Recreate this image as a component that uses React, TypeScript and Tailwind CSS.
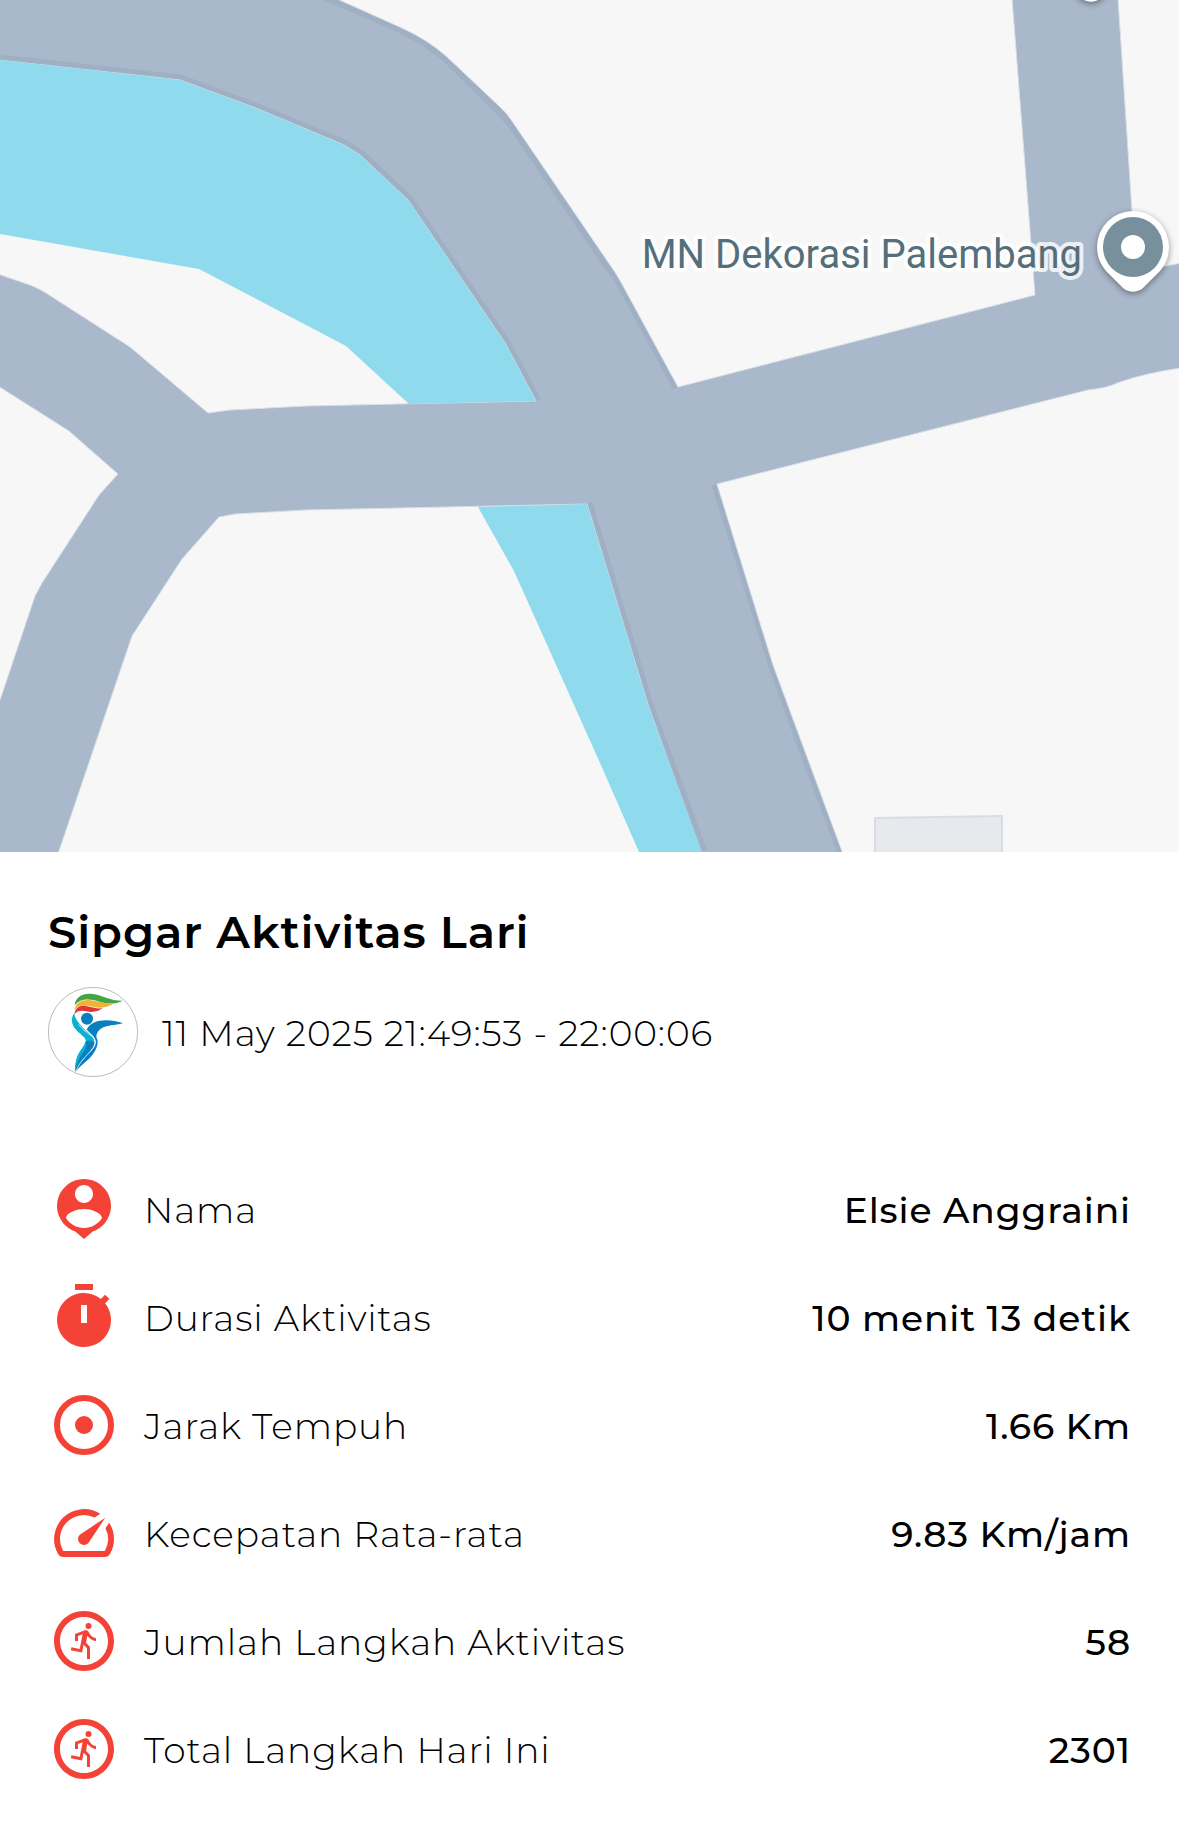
import type { ReactNode } from "react";
import { MdOutlineRunCircle, MdSpeed } from "react-icons/md";

function PersonPinIcon() {
  return (
    <svg viewBox="0 0 24 24" fill="currentColor" className="size-full">
      <path
        fillRule="evenodd"
        d="M12 2a9 9 0 0 0-2.9 17.52L12 22l2.9-2.48A9 9 0 0 0 12 2Zm0 2c1.66 0 3 1.34 3 3s-1.34 3-3 3-3-1.34-3-3 1.34-3 3-3Zm0 14.3c-2.5 0-4.71-1.28-6-3.22.03-1.99 4-3.08 6-3.08s5.97 1.09 6 3.08c-1.29 1.94-3.5 3.22-6 3.22Z"
      />
    </svg>
  );
}

function TimerIcon() {
  return (
    <svg viewBox="0 0 24 24" fill="currentColor" className="size-full">
      <path d="M9 1h6v2H9z" />
      <path
        fillRule="evenodd"
        d="M19.03 7.39l1.42-1.42-1.41-1.41-1.42 1.42A9 9 0 1 0 19.03 7.39ZM13 14h-2V8h2v6Z"
      />
    </svg>
  );
}

function TargetIcon() {
  return (
    <svg viewBox="0 0 24 24" className="size-full">
      <circle cx="12" cy="12" r="9" fill="none" stroke="currentColor" strokeWidth="2" />
      <circle cx="12" cy="12" r="3" fill="currentColor" />
    </svg>
  );
}

function Logo() {
  return (
    <svg viewBox="24 20 270 270" className="size-[90px] shrink-0" role="img" aria-label="Sipgar">
      <circle cx="159" cy="155" r="134" fill="#fff" stroke="#9a9a9a" strokeWidth="2" />
      <path d="M104 75C106 50 128 36 160 41c32 6 52 21 89 20-24 11-46 11-71 3-30-10-57-10-74 11Z" fill="#43a548" />
      <path d="M103 90c4-25 25-34 52-30 24 4 40 12 66 9-17 13-38 16-62 10-24-6-44-5-56 11Z" fill="#f2b233" />
      <path d="M104 102c0-18 15-28 34-25 18 3 31 9 50 7-14 10-30 13-48 9-17-4-29-2-36 9Z" fill="#dc3a32" />
      <circle cx="141" cy="115" r="18" fill="#0a7fc0" />
      <path d="M103 98c-11 16-9 33 3 48 13 16 29 22 31 34 2 16-18 31-25 50-6 16-7 31-6 46 8-33 22-45 36-60 16-16 23-27 20-39-4-12-20-20-32-34-13-15-26-26-27-45Z" fill="#07b3d3" />
      <path d="M249 129c-31-12-66-12-88-2-12 6-19 14-21 21 13 13 27 21 27 37 0 14-13 24-25 37-16 17-29 31-36 54 20-27 36-32 51-52 19-25 18-40 12-54 0-12 6-21 17-27 17-8 37-8 63-14Z" fill="#0a7fc0" />
      <path d="M137 184c-3 18-18 29-24 46-6 16-7 31-6 46 8-26 20-39 33-52 14-15 23-26 24-38-8-5-18-7-27-2Z" fill="#0a7fc0" />
      <path d="M136 182c-3 18-18 29-24 46-5 14-6 26-6 38 7-23 16-39 24-51 8-13 12-22 6-33Z" fill="#07b3d3" />
      <path
        d="M116 132c10 14 21 22 33 31 14 10 19 18 16 30-3 13-19 24-32 40-13 15-21 27-26 43"
        fill="none"
        stroke="#fff"
        strokeWidth="2"
      />
    </svg>
  );
}

function MapPin({ x, y }: { x: number; y: number }) {
  return (
    <g transform={`translate(${x} ${y})`}>
      <path
        d="M0-36a36 36 0 0 1 36 36c0 9-3 17-9 24L10 41c-6 5-14 5-20 0l-17-17c-6-7-9-15-9-24A36 36 0 0 1 0-36Z"
        fill="#fff"
        className="drop-shadow-[0_2px_3px_rgb(0_0_0/0.4)]"
      />
      <circle r="30" fill="#78909c" />
      <circle r="12" fill="#fff" />
    </g>
  );
}

function RouteMap() {
  return (
    <svg viewBox="0 0 1179 852" className="block h-auto w-full" role="img" aria-label="Peta rute">
      <rect width="1179" height="852" fill="#a9b8ca" />

      {/* darker casing of the main road */}
      <g fill="none" stroke="#a0b0c4" strokeWidth="11">
        <path d="M325-5 402 28 425 41 446 56 503 113 513 124 604 258 619 278 678 387" />
        <path d="M717 484 773 663 808 760 843 852" />
        <path d="M0 60 180 80 253 107 344 145 360 155 408 200 505 343 536 401" />
        <path d="M587 503 648 705 702 852" />
      </g>

      {/* blocks between the roads */}
      <g fill="#f7f7f7" stroke="#d9dfe7" strokeWidth="1">
        <path d="M335-2 402 28Q428 40 446 56L499 106Q508 114 514 124L608 262Q616 273 622 284L678 387 1035 295 1012-2Z" />
        <path d="M1118-2 1136 272 1181 263V-2Z" />
        <path d="M1181 368Q1145 373 1117 383 1108 388 1088 390L717 484 773 665 843 854H1181Z" />
        <path d="M-2 60 180 80 253 107 344 145 360 155 408 200 505 343 536 401 306 406 230 410 208 413 130 347 46 293Q38 288 30 285L-2 274Z" />
        <path d="M-2 386 69 431 118 474 99 495 42 583 35 596-2 706Z" />
        <path d="M58 854 132 636 182 559 219 517 235 514 306 510 587 504 648 705 702 854Z" />
      </g>

      {/* river */}
      <g fill="#90daee">
        <path d="M0 60 180 80 253 107 344 145 360 155 408 200 505 343 536 401 409 404 346 346 199 269 0 234Z" />
        <path d="M478 507 587 504 648 705 702 852H639L600 763 514 571Z" />
      </g>

      <path d="M875 854V818L1002 816V854Z" fill="#e8e9ed" stroke="#d9dbe8" strokeWidth="2" />

      <MapPin x={1091} y={-43} />
      <MapPin x={1133} y={247} />
      <text
        x="1082"
        y="268"
        textAnchor="end"
        fill="#546e7a"
        stroke="#fff"
        strokeOpacity="0.8"
        strokeWidth="8"
        strokeLinejoin="round"
        paintOrder="stroke"
        className="font-[Roboto,sans-serif] text-[40px] font-normal tracking-normal"
      >
        MN Dekorasi Palembang
      </text>
    </svg>
  );
}

function StatRow({ icon, label, value }: { icon: ReactNode; label: string; value: string }) {
  return (
    <div className="flex items-center gap-6">
      <span className="size-[72px] shrink-0 text-[#f44336]">{icon}</span>
      <dt className="flex-1 pt-0.5">{label}</dt>
      <dd className="pt-0.5 text-right font-medium">{value}</dd>
    </div>
  );
}

const stats = [
  { icon: <PersonPinIcon />, label: "Nama", value: "Elsie Anggraini" },
  { icon: <TimerIcon />, label: "Durasi Aktivitas", value: "10 menit 13 detik" },
  { icon: <TargetIcon />, label: "Jarak Tempuh", value: "1.66 Km" },
  { icon: <MdSpeed className="size-full" />, label: "Kecepatan Rata-rata", value: "9.83 Km/jam" },
  { icon: <MdOutlineRunCircle className="size-full" />, label: "Jumlah Langkah Aktivitas", value: "58" },
  { icon: <MdOutlineRunCircle className="size-full" />, label: "Total Langkah Hari Ini", value: "2301" },
];

export default function App() {
  return (
    <main className="min-h-screen bg-white font-[Montserrat,sans-serif] text-[36px] leading-[48px] font-light tracking-wide text-black">
      <RouteMap />

      <section className="px-12 pt-12 pb-10">
        <h1 className="text-[45px] leading-[64px] font-semibold">Sipgar Aktivitas Lari</h1>
        <div className="mt-[23px] flex items-center gap-6">
          <Logo />
          <p className="pt-0.5">11 May 2025 21:49:53 - 22:00:06</p>
        </div>

        <dl className="mt-24 flex flex-col gap-9">
          {stats.map((stat) => (
            <StatRow key={stat.label} {...stat} />
          ))}
        </dl>
      </section>
    </main>
  );
}
